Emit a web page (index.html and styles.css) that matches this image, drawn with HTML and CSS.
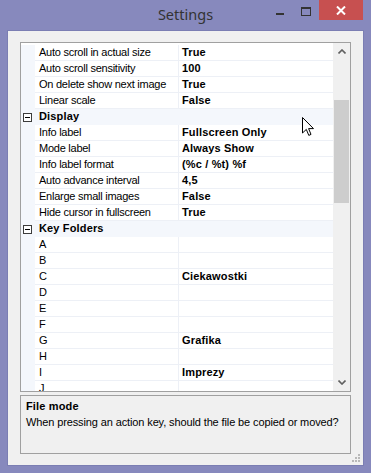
FILE: index.html
```html
<!DOCTYPE html>
<html lang="en">
<head>
  <meta charset="UTF-8">
  <title>Settings</title>
  <link rel="stylesheet" href="styles.css">
</head>
<body>
  <div class="window">
    <div class="titlebar">
      <span></span>
      <div class="title">Settings</div>
      <div class="controls">
        <span class="btn"><i class="min-icon"></i></span>
        <span class="btn"><i class="max-icon"></i></span>
        <span class="btn close">
          <svg width="10" height="9" viewBox="0 0 10 9"><path d="M1 0.5 L9 8.5 M9 0.5 L1 8.5" stroke="#fff" stroke-width="2"/></svg>
        </span>
      </div>
    </div>

    <div class="client">
      <div class="grid">
        <div class="rows">
          <div class="row"><span class="margin"></span><span class="name">Auto scroll in actual size</span><span class="value">True</span></div>
          <div class="row"><span class="margin"></span><span class="name">Auto scroll sensitivity</span><span class="value">100</span></div>
          <div class="row"><span class="margin"></span><span class="name">On delete show next image</span><span class="value">True</span></div>
          <div class="row"><span class="margin"></span><span class="name">Linear scale</span><span class="value">False</span></div>
          <div class="row cat"><span class="margin"><i class="toggle"></i></span><span class="cat-name">Display</span></div>
          <div class="row"><span class="margin"></span><span class="name">Info label</span><span class="value">Fullscreen Only</span></div>
          <div class="row"><span class="margin"></span><span class="name">Mode label</span><span class="value">Always Show</span></div>
          <div class="row"><span class="margin"></span><span class="name">Info label format</span><span class="value">(%c / %t) %f</span></div>
          <div class="row"><span class="margin"></span><span class="name">Auto advance interval</span><span class="value">4,5</span></div>
          <div class="row"><span class="margin"></span><span class="name">Enlarge small images</span><span class="value">False</span></div>
          <div class="row"><span class="margin"></span><span class="name">Hide cursor in fullscreen</span><span class="value">True</span></div>
          <div class="row cat"><span class="margin"><i class="toggle"></i></span><span class="cat-name">Key Folders</span></div>
          <div class="row"><span class="margin"></span><span class="name">A</span><span class="value"></span></div>
          <div class="row"><span class="margin"></span><span class="name">B</span><span class="value"></span></div>
          <div class="row"><span class="margin"></span><span class="name">C</span><span class="value">Ciekawostki</span></div>
          <div class="row"><span class="margin"></span><span class="name">D</span><span class="value"></span></div>
          <div class="row"><span class="margin"></span><span class="name">E</span><span class="value"></span></div>
          <div class="row"><span class="margin"></span><span class="name">F</span><span class="value"></span></div>
          <div class="row"><span class="margin"></span><span class="name">G</span><span class="value">Grafika</span></div>
          <div class="row"><span class="margin"></span><span class="name">H</span><span class="value"></span></div>
          <div class="row"><span class="margin"></span><span class="name">I</span><span class="value">Imprezy</span></div>
          <div class="row"><span class="margin"></span><span class="name">J</span><span class="value"></span></div>
        </div>

        <div class="scrollbar">
          <div class="arrow">
            <svg width="8" height="5" viewBox="0 0 8 5"><path d="M0.5 4.5 L4 1 L7.5 4.5" fill="none" stroke="#606060" stroke-width="1.6"/></svg>
          </div>
          <div class="track"><div class="thumb"></div></div>
          <div class="arrow">
            <svg width="8" height="5" viewBox="0 0 8 5"><path d="M0.5 0.5 L4 4 L7.5 0.5" fill="none" stroke="#606060" stroke-width="1.6"/></svg>
          </div>
        </div>
      </div>

      <div class="help">
        <div class="help-title">File mode</div>
        <div class="help-text">When pressing an action key, should the file be copied or moved?</div>
      </div>

      <!-- size grip -->
      <svg class="grip" width="9" height="9" viewBox="0 0 9 9">
        <rect x="6" y="0" width="2" height="2" fill="#b8b8b8"/>
        <rect x="3" y="3" width="2" height="2" fill="#b8b8b8"/>
        <rect x="6" y="3" width="2" height="2" fill="#b8b8b8"/>
        <rect x="0" y="6" width="2" height="2" fill="#b8b8b8"/>
        <rect x="3" y="6" width="2" height="2" fill="#b8b8b8"/>
        <rect x="6" y="6" width="2" height="2" fill="#b8b8b8"/>
      </svg>
    </div>

    <!-- mouse pointer -->
    <svg class="cursor" width="13" height="20" viewBox="0 0 13 20">
      <path d="M0.5 0.5 V16 L4.3 12.4 L6.8 18.4 L9 17.4 L6.6 11.6 H11.5 Z" fill="#fff" stroke="#000" stroke-width="1" stroke-linejoin="miter"/>
    </svg>
  </div>
</body>
</html>
```

FILE: styles.css
```css
* {
  margin: 0;
  padding: 0;
  box-sizing: border-box;
}

body {
  width: 371px;
  height: 473px;
  background: #8789bd;
  font-family: "Liberation Sans", Arial, sans-serif;
  font-size: 11px;
  letter-spacing: -0.25px;
  color: #000;
  overflow: hidden;
}

.window {
  position: relative;
  width: 371px;
  height: 473px;
  display: flex;
  flex-direction: column;
}

/* title bar */
.titlebar {
  height: 31px;
  display: grid;
  grid-template-columns: 1fr auto 1fr;
}

.title {
  font-family: "Noto Sans", "Open Sans", sans-serif;
  font-size: 14.5px;
  letter-spacing: 0;
  line-height: 29px;
  color: #333;
}

.controls {
  justify-self: end;
  display: flex;
  margin-right: 8px;
  height: 20px;
}

.btn {
  width: 26px;
  height: 20px;
  display: flex;
  align-items: center;
  justify-content: center;
}

.btn.close {
  width: 44px;
  background: #c75050;
}

.min-icon {
  display: block;
  width: 8px;
  height: 2px;
  margin-top: 7px;
  background: #333;
}

.max-icon {
  display: block;
  width: 10px;
  height: 9px;
  margin-top: 2px;
  border: 1px solid #333;
  border-top-width: 2px;
}

/* client area */
.client {
  position: relative;
  flex: 1;
  margin: 0 8px 8px;
  padding: 11px 12px 0;
  background: #f0f0f0;
  box-shadow: 0 0 0 1px #7b7eb3;
}

.grid {
  display: flex;
  height: 350px;
  border: 1px solid #a0a0a0;
  background: #fff;
}

.rows {
  flex: 1;
  overflow: hidden;
  padding-top: 2px;
}

.row {
  display: grid;
  grid-template-columns: 14px 144px 1fr;
  height: 16px;
  line-height: 15px;
}

.row .margin {
  background: #f4f7fc;
}

.row .name {
  padding-left: 4px;
  border-right: 1px solid #edf0f6;
  border-bottom: 1px solid #edf0f6;
  white-space: nowrap;
  overflow: hidden;
}

.row .value {
  padding-left: 3px;
  font-weight: bold;
  letter-spacing: 0.15px;
  border-bottom: 1px solid #edf0f6;
  white-space: nowrap;
  overflow: hidden;
}

.row.cat {
  background: #f4f7fc;
}

.row.cat .margin {
  display: flex;
  align-items: center;
  padding-left: 2px;
}

.cat-name {
  grid-column: 2 / 4;
  padding-left: 4px;
  font-weight: bold;
  letter-spacing: 0.15px;
}

.toggle {
  position: relative;
  display: block;
  width: 9px;
  height: 9px;
  border: 1px solid #3c3c3c;
  background: #fff;
}

.toggle::after {
  content: "";
  position: absolute;
  left: 1px;
  top: 3px;
  width: 5px;
  height: 1px;
  background: #000;
}

/* scrollbar */
.scrollbar {
  width: 17px;
  display: flex;
  flex-direction: column;
  background: #f0f0f0;
}

.arrow {
  height: 17px;
  display: flex;
  align-items: center;
  justify-content: center;
}

.track {
  flex: 1;
}

.thumb {
  margin: 40px 0 0 1px;
  width: 15px;
  height: 103px;
  background: #cdcdcd;
}

/* description pane */
.help {
  margin-top: 3px;
  height: 59px;
  padding: 3px 5px;
  border: 1px solid #a0a0a0;
  background: #f0f0f0;
}

.help-title {
  font-weight: bold;
  letter-spacing: 0.15px;
  line-height: 14px;
}

.help-text {
  margin-top: 2px;
  line-height: 14px;
  letter-spacing: -0.12px;
  white-space: nowrap;
}

.grip {
  position: absolute;
  right: 2px;
  bottom: 2px;
}

.cursor {
  position: absolute;
  left: 302px;
  top: 117px;
}
```
